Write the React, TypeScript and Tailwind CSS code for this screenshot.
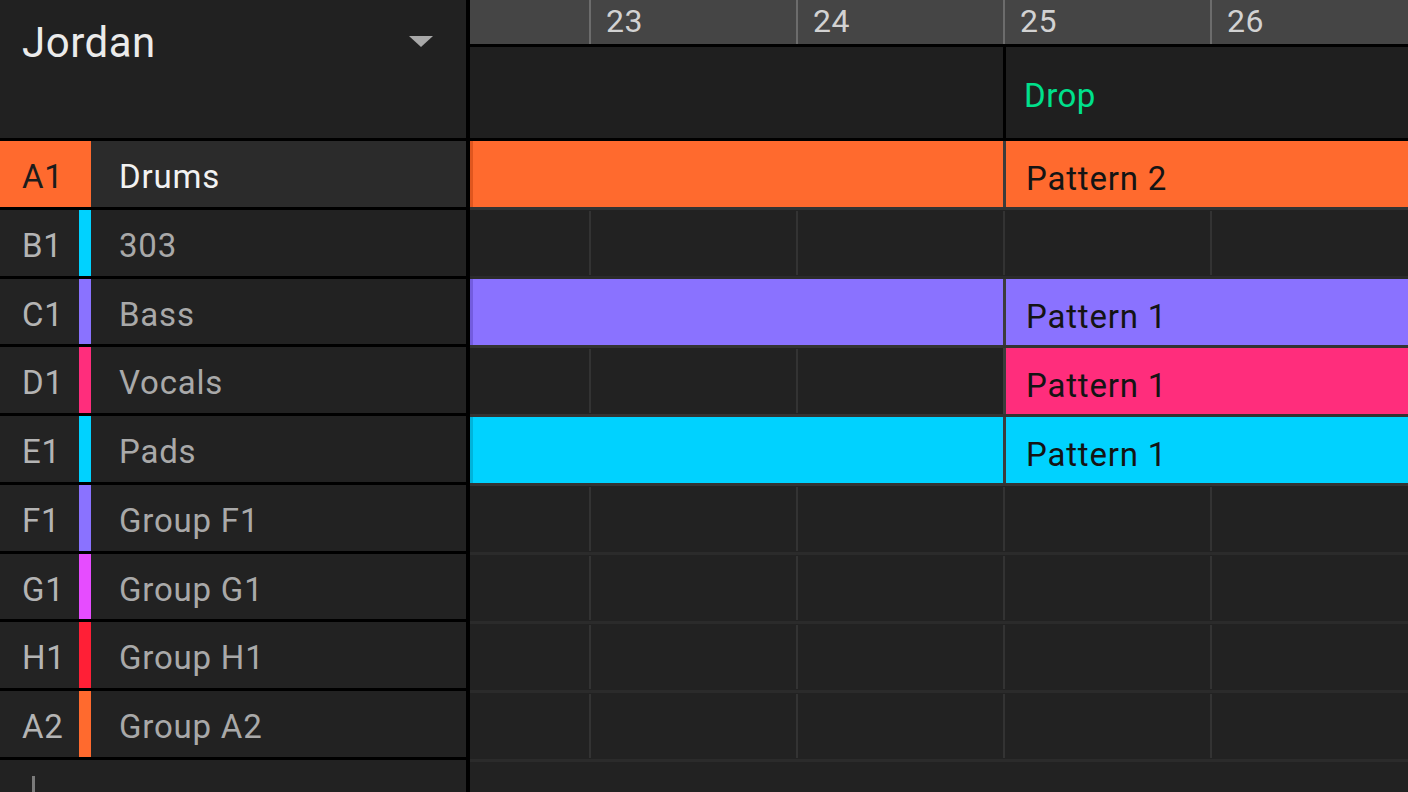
import React from 'react';

type Track = {
  slot: string;
  name: string;
  color: string;
  selected?: boolean;
};

type Lane = {
  color?: string;
  edge?: string;
  label?: string;
  // clip starts only at bar 25
  lateStart?: boolean;
};

const tracks: Track[] = [
  { slot: 'A1', name: 'Drums', color: 'bg-[#ff6a2e]', selected: true },
  { slot: 'B1', name: '303', color: 'bg-[#00d2ff]' },
  { slot: 'C1', name: 'Bass', color: 'bg-[#8a72ff]' },
  { slot: 'D1', name: 'Vocals', color: 'bg-[#ff2d7c]' },
  { slot: 'E1', name: 'Pads', color: 'bg-[#00d2ff]' },
  { slot: 'F1', name: 'Group F1', color: 'bg-[#8a72ff]' },
  { slot: 'G1', name: 'Group G1', color: 'bg-[#e64cff]' },
  { slot: 'H1', name: 'Group H1', color: 'bg-[#ff1f36]' },
  { slot: 'A2', name: 'Group A2', color: 'bg-[#ff6a2e]' },
];

const lanes: Lane[] = [
  { color: 'bg-[#ff6a2e]', edge: 'border-[#e0561f]', label: 'Pattern 2' },
  {},
  { color: 'bg-[#8a72ff]', edge: 'border-[#735cdf]', label: 'Pattern 1' },
  { color: 'bg-[#ff2d7c]', label: 'Pattern 1', lateStart: true },
  { color: 'bg-[#00d2ff]', edge: 'border-[#00b4dc]', label: 'Pattern 1' },
  {},
  {},
  {},
  {},
];

const bars = ['23', '24', '25', '26'];

const font = { fontFamily: 'Roboto, "Noto Sans", sans-serif' };

const TrackRow: React.FC<{ track: Track }> = ({ track }) => (
  <div className="flex h-[69px] border-b-[3px] border-black text-[33px] leading-none tracking-[0.8px]">
    {track.selected ? (
      <div className={`w-[91px] ${track.color} pl-[22px] pt-[19px] text-[#1c1c1c]`}>{track.slot}</div>
    ) : (
      <div className="flex w-[91px] bg-[#232323]">
        <div className="w-[79px] pl-[22px] pt-[19px] text-[#b4b4b4]">{track.slot}</div>
        <div className={`w-[12px] ${track.color}`} />
      </div>
    )}
    <div
      className={`flex-1 pl-[28px] pt-[19px] ${
        track.selected ? 'bg-[#2b2b2b] text-[#f2f2f2]' : 'bg-[#222] text-[#a9a9a9]'
      }`}
    >
      {track.name}
    </div>
  </div>
);

// empty bar cells up to (and optionally past) bar 25
const GridCells: React.FC<{ count: number }> = ({ count }) => (
  <>
    <div className="w-[119px] shrink-0" />
    {Array.from({ length: count }).map((_, i) => (
      <div key={i} className={`${i < 3 ? 'w-[207px]' : 'flex-1'} shrink-0 py-[1px]`}>
        <div className="h-full w-[2px] bg-[#333]" />
      </div>
    ))}
  </>
);

const LaneRow: React.FC<{ lane: Lane }> = ({ lane }) => {
  if (!lane.color) {
    return (
      <div className="flex h-[69px] border-b-[3px] border-[#2b2b2b] bg-[#222]">
        <GridCells count={4} />
      </div>
    );
  }
  return (
    <div className="flex h-[69px] border-b-[3px] border-[#333] bg-[#222]">
      {lane.lateStart ? (
        <div className="flex w-[533px] shrink-0">
          <GridCells count={2} />
        </div>
      ) : (
        <div className={`w-[533px] shrink-0 border-l-[3px] ${lane.edge} ${lane.color}`} />
      )}
      <div
        className={`flex-1 border-l-[3px] border-[#3c3c3c] ${lane.color} pl-[20px] pt-[21px] text-[33px] leading-none tracking-[0.8px] text-[#141414]`}
      >
        {lane.label}
      </div>
    </div>
  );
};

const App: React.FC = () => {
  return (
    <div className="flex h-[792px] w-[1408px] overflow-hidden bg-[#222]" style={font}>
      {/* track list */}
      <div className="flex w-[470px] shrink-0 flex-col border-r-4 border-black">
        <div className="flex h-[141px] shrink-0 justify-between border-b-[3px] border-black bg-[#212121]">
          <div className="pl-[22px] pt-[22px] text-[42px] leading-none tracking-[0.5px] text-[#ebebeb]">Jordan</div>
          <svg width="24" height="12" viewBox="0 0 24 12" className="mr-[33px] mt-[36px]">
            <path d="M0 0 H24 L12 11 Z" fill="#a8a8a8" />
          </svg>
        </div>
        {tracks.map((t) => (
          <TrackRow key={t.slot} track={t} />
        ))}
        <div className="flex-1 pl-[32px] pt-[16px]">
          <div className="h-[16px] w-[3px] bg-[#7a7a7a]" />
        </div>
      </div>

      {/* arrangement */}
      <div className="flex min-w-0 flex-1 flex-col">
        <div className="flex h-[47px] shrink-0 border-b-[3px] border-black bg-[#454545]">
          <div className="w-[119px] shrink-0" />
          {bars.map((b, i) => (
            <div
              key={b}
              className={`${i < 3 ? 'w-[207px]' : 'flex-1'} shrink-0 border-l-2 border-[#6c6c6c] pl-[15px] pt-[5px] text-[32px] leading-none tracking-[0.5px] text-[#d2d2d2]`}
            >
              {b}
            </div>
          ))}
        </div>
        <div className="flex h-[94px] shrink-0 border-b-[3px] border-black bg-[#1f1f1f]">
          <div className="w-[533px] shrink-0" />
          <div className="flex-1 border-l-[3px] border-black pl-[18px] pt-[32px] text-[33px] leading-none tracking-[0.5px] text-[#00e08c]">
            Drop
          </div>
        </div>
        {lanes.map((l, i) => (
          <LaneRow key={i} lane={l} />
        ))}
        <div className="flex-1 bg-[#222]" />
      </div>
    </div>
  );
};

export default App;
